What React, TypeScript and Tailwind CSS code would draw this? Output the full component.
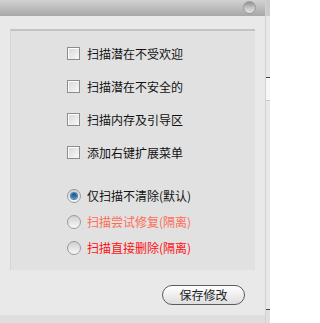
import React from "react";

const font = { fontFamily: '"Noto Sans CJK SC", "Noto Sans", sans-serif' };

function CheckRow(props: { readonly label: string }) {
	return (
		<div className="flex h-[33px] items-center gap-[7px]">
			<span className="box-border h-[13px] w-[13px] border border-[#8c8c8c] bg-gradient-to-br from-[#d6d6d6] to-[#fafafa] shadow-[inset_1px_1px_0_#ffffff]" />
			<span className="text-[12px] leading-none text-[#111]">{props.label}</span>
		</div>
	);
}

function RadioRow(props: { readonly label: string; readonly color: string; readonly checked?: boolean }) {
	return (
		<div className="flex h-[26px] items-center gap-[6px]">
			<span className="flex h-[14px] w-[14px] items-center justify-center rounded-full border border-[#9a9a9a] bg-gradient-to-b from-[#d0d0d0] to-[#f8f8f8]">
				{props.checked ? (
					<span className="h-[6px] w-[6px] rounded-full bg-gradient-to-b from-[#0d4f8c] to-[#3a93d6] shadow-[0_0_0_1px_#5a7fa5]" />
				) : null}
			</span>
			<span className={`text-[12px] leading-none ${props.color}`}>{props.label}</span>
		</div>
	);
}

export default function App() {
	return (
		<div className="flex h-[323px] w-[270px] overflow-hidden bg-[#e8e8e8]" style={font}>
			<div className="flex w-[266px] flex-col border-r border-[#d2d2d2]">
				<div className="flex h-[16px] items-start justify-end bg-gradient-to-b from-[#d2d2d2] to-[#a7a7a7] pr-[9px]">
					<span className="mt-[1px] h-[13px] w-[13px] rounded-full border border-[#9a9a9a] bg-gradient-to-b from-[#8f8f8f] via-[#c4c4c4] to-[#e4e4e4]" />
				</div>
				<div className="flex flex-1 flex-col bg-[#e9e9e9] px-[10px] pt-[13px]">
					<div className="h-[241px] border-t-2 border-l border-t-[#c3c3c3] border-l-[#d6d6d6] bg-[#e1e1e1] pl-[56px] pt-[6px]">
						<CheckRow label="扫描潜在不受欢迎" />
						<CheckRow label="扫描潜在不安全的" />
						<CheckRow label="扫描内存及引导区" />
						<CheckRow label="添加右键扩展菜单" />
						<div className="mt-[14px]">
							<RadioRow label="仅扫描不清除(默认)" color="text-[#111]" checked />
							<RadioRow label="扫描尝试修复(隔离)" color="text-[#ff6b55]" />
							<RadioRow label="扫描直接删除(隔离)" color="text-[#ff1010]" />
						</div>
					</div>
					<div className="mt-[15px] flex justify-end pr-[10px]">
						<button className="h-[20px] w-[83px] rounded-full border border-[#5c5c5c] bg-gradient-to-b from-[#ffffff] to-[#dedede] text-[12px] leading-none text-[#222]">
							保存修改
						</button>
					</div>
				</div>
				<div className="h-[8px] bg-[#dedede]" />
			</div>
			<div className="flex w-[4px] flex-col">
				<div className="h-[16px] bg-[#cbcbcb]" />
				<div className="h-[61px] bg-[#e8e8e8]" />
				<div className="h-[1px] bg-[#444]" />
				<div className="h-[22px] bg-[#f7f7f7]" />
				<div className="h-[1px] bg-[#c8c8c8]" />
				<div className="h-[208px] bg-[#e8e8e8]" />
				<div className="h-[1px] bg-[#444]" />
				<div className="flex-1 bg-[#e0e0e0]" />
			</div>
		</div>
	);
}
